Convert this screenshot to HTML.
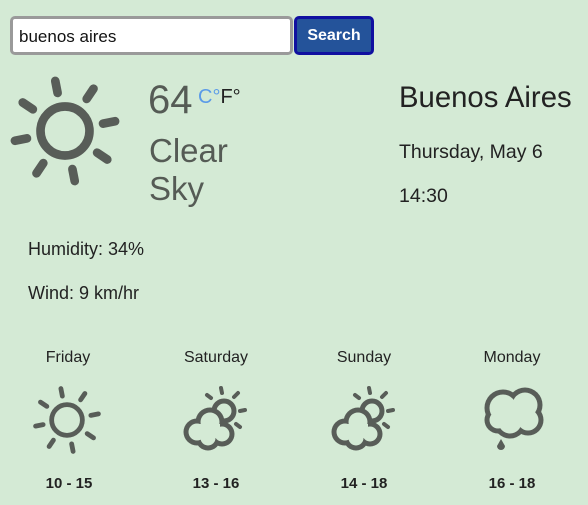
<!DOCTYPE html>
<html><head><meta charset="utf-8"><style>
*{margin:0;padding:0;box-sizing:border-box}
body{width:588px;height:505px;background:#d4ead5;font-family:"Liberation Sans",Arial,sans-serif;position:relative;overflow:hidden;color:#222}
.a{position:absolute;white-space:nowrap}
#inp{left:10px;top:16px;width:283px;height:39px;background:#fff;border:3px solid #9a9a9a;border-radius:5px;font-size:17px;padding:8px 0 0 6px;color:#111}
#btn{left:294px;top:16px;width:80px;height:39px;background:#24539a;border:3px solid #1010a0;border-radius:5px;color:#fff;font-weight:bold;font-size:16px;text-align:center;padding-top:8px}
.g{color:#555b55}
.day{font-size:16px;width:140px;text-align:center}
.t{font-size:15px;font-weight:bold;width:140px;text-align:center}
</style></head><body>
<div class="a" id="inp">buenos aires</div>
<div class="a" id="btn">Search</div>
<svg class="a" style="left:0;top:0" width="588" height="505">
<g stroke="#585d58" stroke-linecap="round" fill="none">
 <g transform="translate(65,131) scale(1.02)" stroke-width="8.5">
  <circle r="24"/>
  <g id="r1"><line x1="0" y1="-38" x2="0" y2="-50" transform="rotate(-11)"/><line x1="0" y1="-38" x2="0" y2="-50" transform="rotate(34)"/><line x1="0" y1="-38" x2="0" y2="-50" transform="rotate(79)"/><line x1="0" y1="-38" x2="0" y2="-50" transform="rotate(124)"/><line x1="0" y1="-38" x2="0" y2="-50" transform="rotate(169)"/><line x1="0" y1="-38" x2="0" y2="-50" transform="rotate(214)"/><line x1="0" y1="-38" x2="0" y2="-50" transform="rotate(259)"/><line x1="0" y1="-38" x2="0" y2="-50" transform="rotate(304)"/></g>
 </g>
 <g transform="translate(67,420) scale(0.64)" stroke-width="7.5">
  <circle r="24"/><use href="#r1"/>
 </g>
 <g id="cs">
  <g transform="translate(224,411)" stroke-width="5">
   <circle r="10"/>
   <g stroke-width="4"><line x1="-2" y1="-18" x2="-3" y2="-23"/><line x1="10" y1="-14" x2="14" y2="-18"/><line x1="16" y1="0" x2="21" y2="-1"/><line x1="12" y1="13" x2="16" y2="16"/><line x1="-13" y1="-13" x2="-17" y2="-16"/></g>
  </g>
  <g stroke="none" fill="#585d58">
   <circle cx="197" cy="432" r="13.5"/><circle cx="210" cy="422" r="14.5"/><circle cx="222" cy="434" r="12.5"/><circle cx="208" cy="438" r="12.5"/>
  </g>
  <g stroke="none" fill="#d4ead5">
   <circle cx="197" cy="432" r="8.5"/><circle cx="210" cy="422" r="9.5"/><circle cx="222" cy="434" r="7.5"/><circle cx="208" cy="438" r="7.5"/><rect x="198" y="424" width="22" height="14"/>
  </g>
 </g>
 <use href="#cs" x="148"/>
 <g stroke="none" fill="#585d58">
  <circle cx="503" cy="408" r="18.5"/><circle cx="525" cy="405" r="17.5"/><circle cx="528" cy="420" r="15.5"/><circle cx="510" cy="422" r="16.5"/><circle cx="498" cy="420" r="13.5"/>
 </g>
 <g stroke="none" fill="#d4ead5">
  <circle cx="503" cy="408" r="13.5"/><circle cx="525" cy="405" r="12.5"/><circle cx="528" cy="420" r="10.5"/><circle cx="510" cy="422" r="11.5"/><circle cx="498" cy="420" r="8.5"/><rect x="502" y="404" width="26" height="18"/>
 </g>
 <path d="M501,439 L505,446 A4,4 0 1 1 497,446 Z" fill="#585d58" stroke="none"/>
</g>
</svg>
<div class="a g" style="left:148px;top:78px;font-size:40px">64</div>
<div class="a" style="left:198px;top:86px;font-size:20px"><span style="color:#5b9be8">C°</span><span>F°</span></div>
<div class="a g" style="left:149px;top:132px;font-size:33px;line-height:38px">Clear<br>Sky</div>
<div class="a" style="left:399px;top:81px;font-size:29.3px">Buenos Aires</div>
<div class="a" style="left:399px;top:141px;font-size:19.5px">Thursday, May 6</div>
<div class="a" style="left:399px;top:185px;font-size:19.5px">14:30</div>
<div class="a" style="left:28px;top:239px;font-size:18px">Humidity: 34%</div>
<div class="a" style="left:28px;top:283px;font-size:18px">Wind: 9 km/hr</div>
<div class="a day" style="left:-2px;top:349px">Friday</div>
<div class="a day" style="left:146px;top:349px">Saturday</div>
<div class="a day" style="left:294px;top:349px">Sunday</div>
<div class="a day" style="left:442px;top:349px">Monday</div>
<div class="a t" style="left:-1px;top:475px">10 - 15</div>
<div class="a t" style="left:146px;top:475px">13 - 16</div>
<div class="a t" style="left:294px;top:475px">14 - 18</div>
<div class="a t" style="left:442px;top:475px">16 - 18</div>
</body></html>
